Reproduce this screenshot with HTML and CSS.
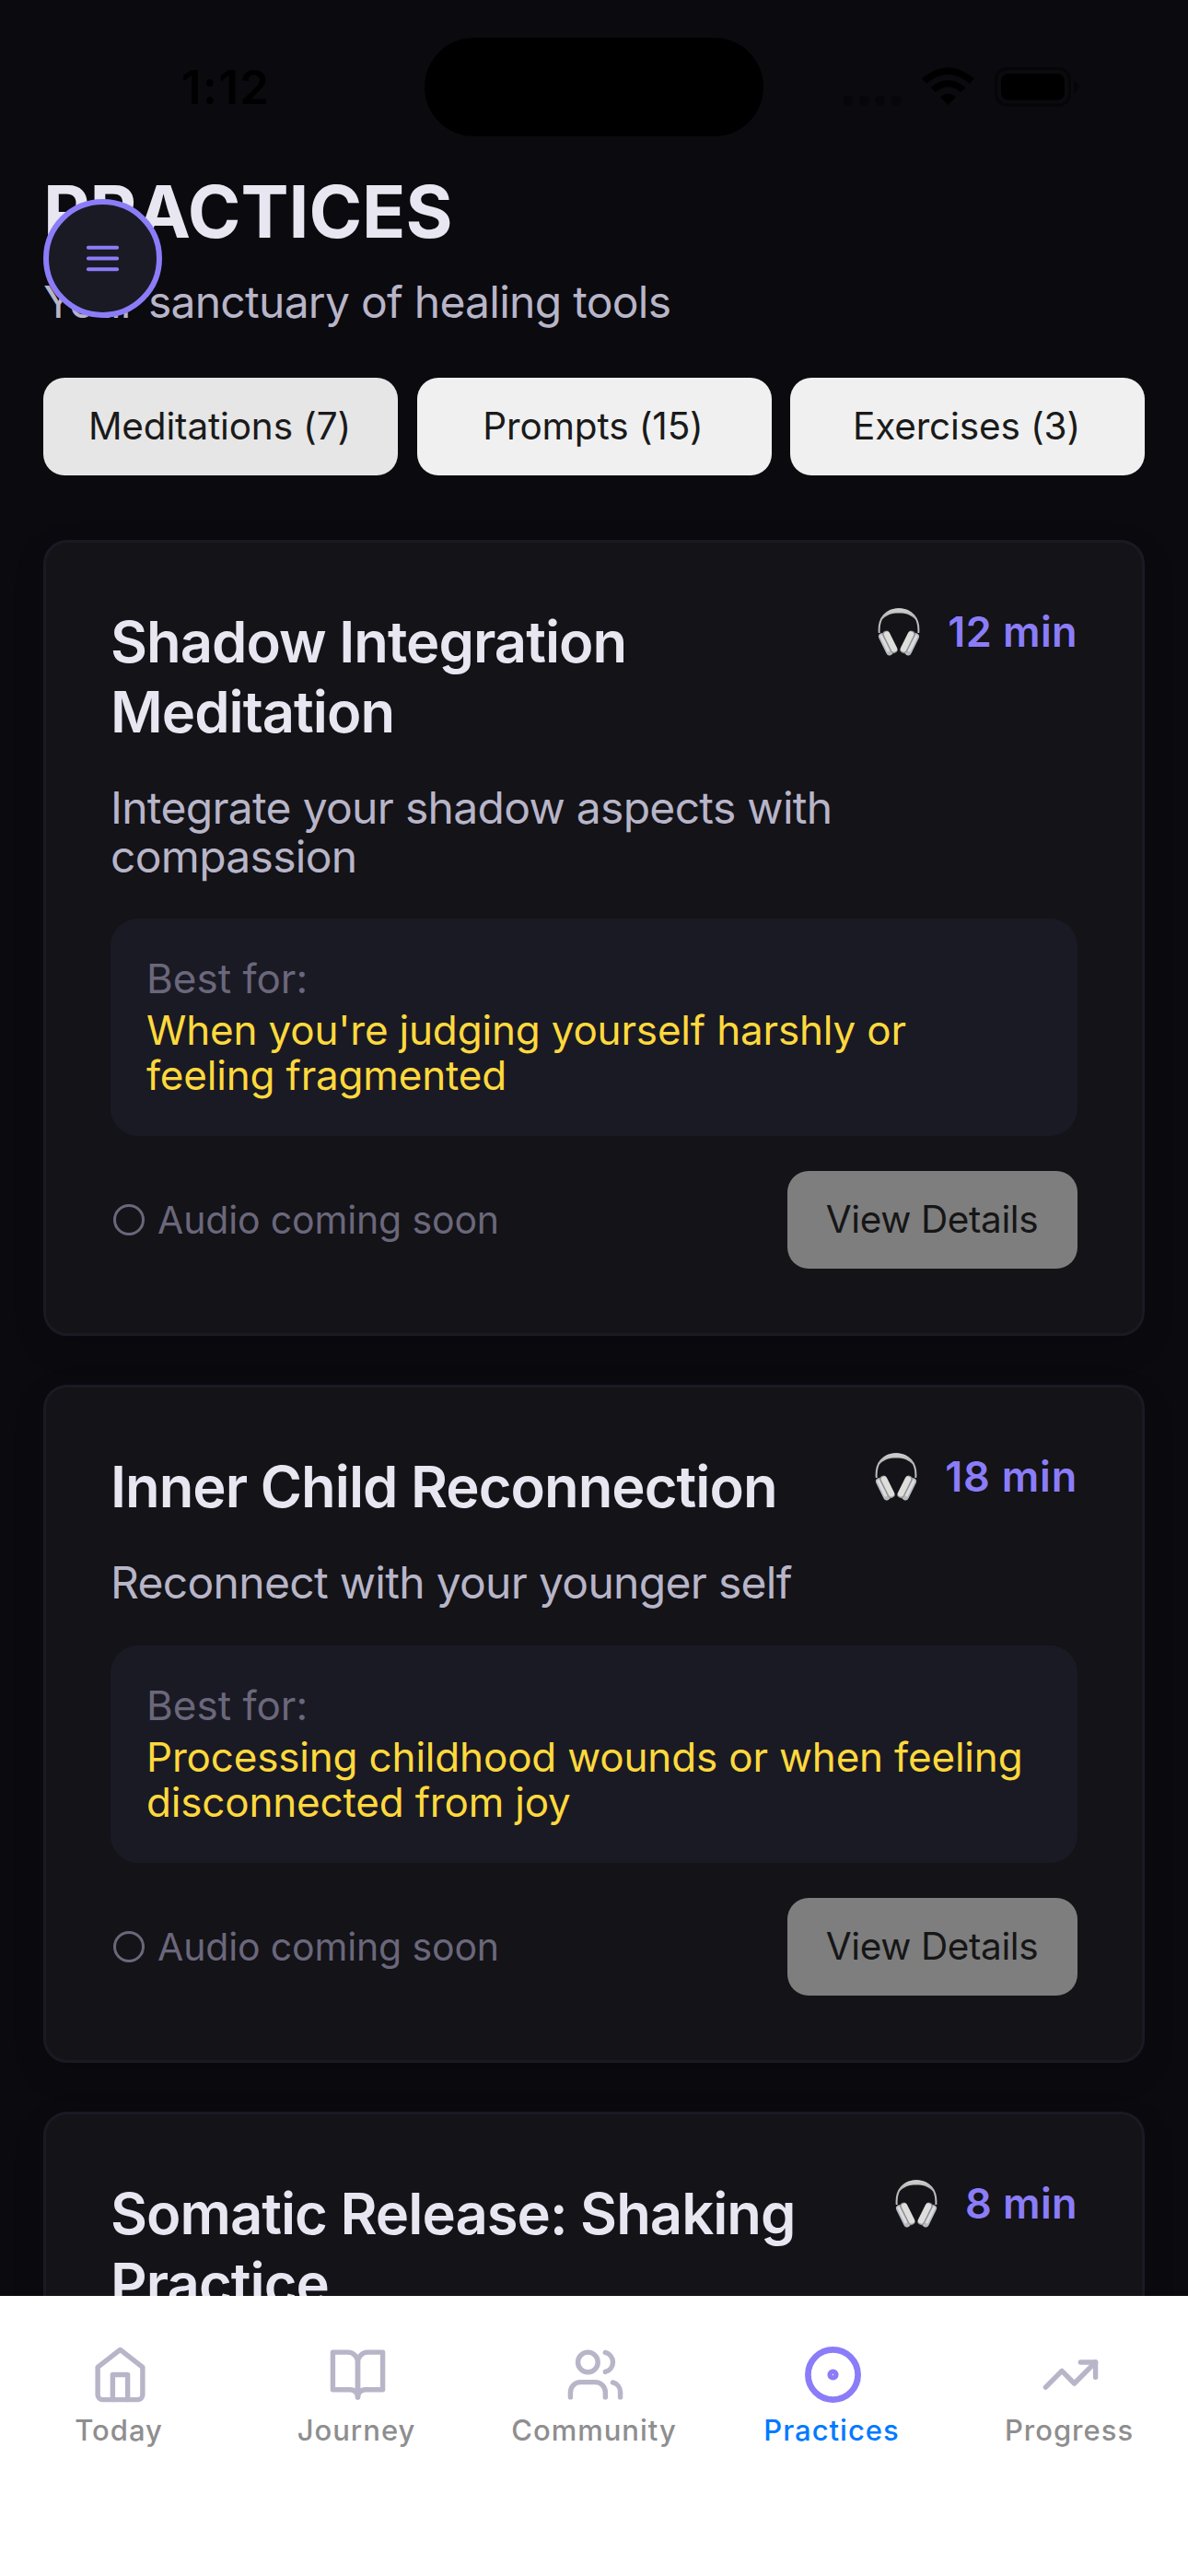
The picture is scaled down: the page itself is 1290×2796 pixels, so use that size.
FILE: index.html
```html
<!DOCTYPE html>
<html lang="en">
<head>
<meta charset="utf-8">
<title>Practices</title>
<link rel="stylesheet" href="styles.css">
</head>
<body>
<svg class="sprite" aria-hidden="true">
  <defs>
    <linearGradient id="band" x1="0" y1="0" x2="0" y2="1"><stop offset="0" stop-color="#d2d2d2"/><stop offset="1" stop-color="#a5a5a5"/></linearGradient>
    <symbol id="headphones" viewBox="0 0 46 52">
      <path d="M1.700 27C.4 10.500 9.500 1.300 23 1.300S45.600 10.500 44.300 27" fill="none" stroke="#bdbdbd" stroke-width="2"/>
      <path d="M4 13.500C8.500 3.500 15 .3 23 .3S37.500 3.500 42 13.500C36.500 7.200 30.500 5.600 23 5.600S9.500 7.200 4 13.500Z" fill="url(#band)"/>
      <g id="cup" fill="none" stroke-linecap="round">
        <path d="M4.800 31L12.900 47.600" stroke="#b7babd" stroke-width="7.600"/>
        <path d="M4 30.500L11.500 46" stroke="#d9dde2" stroke-width="3"/>
        <path d="M9.300 28.600L17.600 45" stroke="#8f8f8f" stroke-width="8"/>
        <path d="M10 28.500L17.900 44.500" stroke="#dededc" stroke-width="6.400"/>
      </g>
      <use href="#cup" transform="translate(46 0) scale(-1 1)"/>
    </symbol>
  </defs>
</svg>
<div class="status">
  <span class="time">1:12</span>
  <span class="island"></span>
  <div class="signals">
    <svg class="dots" viewBox="0 0 64 12"><circle cx="6" cy="6" r="5.500"/><circle cx="23.300" cy="6" r="5.500"/><circle cx="40.700" cy="6" r="5.500"/><circle cx="58" cy="6" r="5.500"/></svg>
    <svg class="wifi" viewBox="0 0 57 41"><path d="M28.500 41L20.300 32.500Q28.500 25 36.700 32.500Z"/><path d="M14.700 27L9.700 22Q28.500 6 47.300 22L42.300 27Q28.500 15.500 14.700 27Z"/><path d="M5.200 17.500L0 12.300Q28.500-12 57 12.300L51.800 17.500Q28.500-2 5.200 17.500Z"/></svg>
    <svg class="battery" viewBox="0 0 92 43"><rect x="1.500" y="1.500" width="80" height="39.500" rx="12" fill="none" stroke="#060609" stroke-width="3"/><rect x="7" y="7" width="69" height="28.500" rx="8"/><path d="M86 15q5 2 5 6.300t-5 6.300z" fill="#060609"/></svg>
  </div>
</div>
<button class="menu" aria-label="Menu"><svg viewBox="0 0 24 24"><path d="M4 6h16M4 12h16M4 18h16"/></svg></button>
<main class="screen">
  <h1>PRACTICES</h1>
  <p class="subtitle">Your sanctuary of healing tools</p>
  <div class="filters">
    <button class="filter filter-active">Meditations (7)</button>
    <button class="filter">Prompts (15)</button>
    <button class="filter">Exercises (3)</button>
  </div>
  <section class="list">
    <article class="card">
      <header class="card-head"><h2>Shadow Integration<br>Meditation</h2><div class="duration"><svg class="phones"><use href="#headphones"/></svg><span>12 min</span></div></header>
      <p class="desc">Integrate your shadow aspects with<br>compassion</p>
      <div class="best"><p class="label">Best for:</p><p class="use">When you're judging yourself harshly or<br>feeling fragmented</p></div>
      <footer class="card-foot"><p class="audio"><i class="ring"></i>Audio coming soon</p><button class="details">View Details</button></footer>
    </article>
    <article class="card">
      <header class="card-head"><h2>Inner Child Reconnection</h2><div class="duration"><svg class="phones"><use href="#headphones"/></svg><span class="wide">18 min</span></div></header>
      <p class="desc">Reconnect with your younger self</p>
      <div class="best"><p class="label">Best for:</p><p class="use">Processing childhood wounds or when feeling<br>disconnected from joy</p></div>
      <footer class="card-foot"><p class="audio"><i class="ring"></i>Audio coming soon</p><button class="details">View Details</button></footer>
    </article>
    <article class="card">
      <header class="card-head"><h2>Somatic Release: Shaking<br>Practice</h2><div class="duration"><svg class="phones"><use href="#headphones"/></svg><span>8 min</span></div></header>
    </article>
  </section>
</main>
<nav class="tabbar">
  <a class="tab"><svg viewBox="0 0 24 24"><path d="M3 9l9-7 9 7v11a2 2 0 0 1-2 2H5a2 2 0 0 1-2-2z"/><path d="M9 22V12h6v10"/></svg><span>Today</span></a>
  <a class="tab"><svg viewBox="0 0 24 24"><path d="M2 3h6a4 4 0 0 1 4 4v14a3 3 0 0 0-3-3H2z"/><path d="M22 3h-6a4 4 0 0 0-4 4v14a3 3 0 0 1 3-3h7z"/></svg><span>Journey</span></a>
  <a class="tab"><svg viewBox="0 0 24 24"><path d="M16 21v-2a4 4 0 0 0-4-4H6a4 4 0 0 0-4 4v2"/><circle cx="9" cy="7" r="4"/><path d="M22 21v-2a4 4 0 0 0-3-3.870"/><path d="M16 3.130a4 4 0 0 1 0 7.750"/></svg><span>Community</span></a>
  <a class="tab tab-active"><svg viewBox="0 0 24 24"><circle cx="12" cy="12" r="10"/><circle cx="12" cy="12" r="1"/></svg><span>Practices</span></a>
  <a class="tab"><svg viewBox="0 0 24 24"><path d="M22 7l-8.500 8.500-5-5L2 17"/><path d="M16 7h6v6"/></svg><span>Progress</span></a>
</nav>
</body>
</html>
```

FILE: styles.css
```css
* { box-sizing: border-box; margin: 0; padding: 0; }
body {
  position: relative;
  display: flex;
  flex-direction: column;
  width: 1290px;
  height: 2796px;
  overflow: hidden;
  background: #0a0a0f;
  color: #e8e6f0;
  font-family: Inter, "Liberation Sans", sans-serif;
}
button { border: 0; font: inherit; color: inherit; }
.sprite { position: absolute; width: 0; height: 0; }

.status { position: absolute; inset: 0 0 auto 0; height: 183px; }
.time { position: absolute; left: 197px; top: 64px; font-size: 51px; line-height: 62px; font-weight: 600; letter-spacing: 1.300px; color: #000; }
.island { position: absolute; left: 461px; top: 41px; width: 368px; height: 107px; border-radius: 54px; background: #000; }
.signals { position: absolute; left: 915px; top: 73px; display: flex; align-items: flex-start; }
.dots { width: 64px; height: 12px; margin: 30px 22px 0 0; fill: #07070b; }
.wifi { width: 57px; height: 41px; margin-right: 22px; }
.battery { width: 92px; height: 43px; }

.menu {
  position: absolute;
  left: 47px;
  top: 216px;
  width: 129px;
  height: 129px;
  display: grid;
  place-items: center;
  border: 6px solid #8b7cf8;
  border-radius: 50%;
  background: #1a1a24;
}
.menu svg { width: 47px; height: 47px; fill: none; stroke: #8b7cf8; stroke-width: 2; stroke-linecap: round; }

.screen { flex: 1; min-height: 0; overflow: hidden; padding: 183px 47px 0; }
h1 { font-size: 78px; line-height: 94px; font-weight: 700; }
.subtitle { margin-top: 22px; font-size: 48px; line-height: 58px; letter-spacing: -.74px; color: #b8b5c8; }
.filters { display: grid; grid-template-columns: repeat(3, 1fr); gap: 20.500px; margin-top: 53px; }
.filter { height: 106px; padding: 0 2px 2px 0; border-radius: 23px; background: #f0f0f0; color: #1a1a1a; font-size: 40.500px; letter-spacing: -.15px; }
.filter-active { background: #e6e6e6; }

.list { display: flex; flex-direction: column; gap: 53px; margin-top: 70px; }
.card { padding: 70px; border: 3px solid #1a1a24; border-radius: 26px; background: #131318; box-shadow: 0 12px 36px rgba(0, 0, 0, .12); }
.card-head { display: flex; justify-content: space-between; align-items: flex-start; }
h2 { font-size: 61.500px; line-height: 76px; font-weight: 600; letter-spacing: -.97px; white-space: nowrap; }
.duration { display: flex; align-items: center; gap: 30px; font-size: 45px; line-height: 54px; font-weight: 600; letter-spacing: .4px; color: #8b7cf8; }
.wide { letter-spacing: .8px; }
.phones { width: 46px; height: 52px; }
.desc { margin-top: 40px; font-size: 48px; line-height: 52.700px; letter-spacing: -.7px; color: #b8b5c8; }
.best { margin-top: 41px; padding: 41px 39px 40.500px; border-radius: 30px; background: #1a1a24; font-size: 44px; line-height: 49.300px; }
.label { color: #6b677b; }
.use { margin-top: 6.400px; letter-spacing: -.18px; color: #ffd93d; white-space: nowrap; }
.card-foot { display: flex; justify-content: space-between; align-items: center; margin-top: 38px; }
.audio { display: flex; align-items: center; gap: 14px; padding-left: 3px; font-size: 41px; letter-spacing: -.15px; color: #6b677b; }
.ring { width: 34px; height: 34px; border: 3px solid #6b677b; border-radius: 50%; }
.details { width: 315px; height: 106px; padding: 0 1px 1px 0; border-radius: 23px; background: #7e7e7f; color: #161616; font-size: 40.500px; letter-spacing: -.4px; }

.tabbar { flex: none; display: grid; grid-template-columns: repeat(5, 1fr); height: 304px; padding-top: 53px; background: #fff; }
.tab { display: flex; flex-direction: column; align-items: center; gap: 9px; font-size: 31px; line-height: 38px; font-weight: 500; letter-spacing: 1px; color: #8e8e8f; }
.tab svg { width: 65px; height: 65px; margin-left: 2px; fill: none; stroke: #b8b5c8; stroke-width: 2; stroke-linecap: round; stroke-linejoin: round; }
.tab-active { color: #007aff; }
.tab-active svg { stroke: #8b7cf8; stroke-width: 2.500; }
```
